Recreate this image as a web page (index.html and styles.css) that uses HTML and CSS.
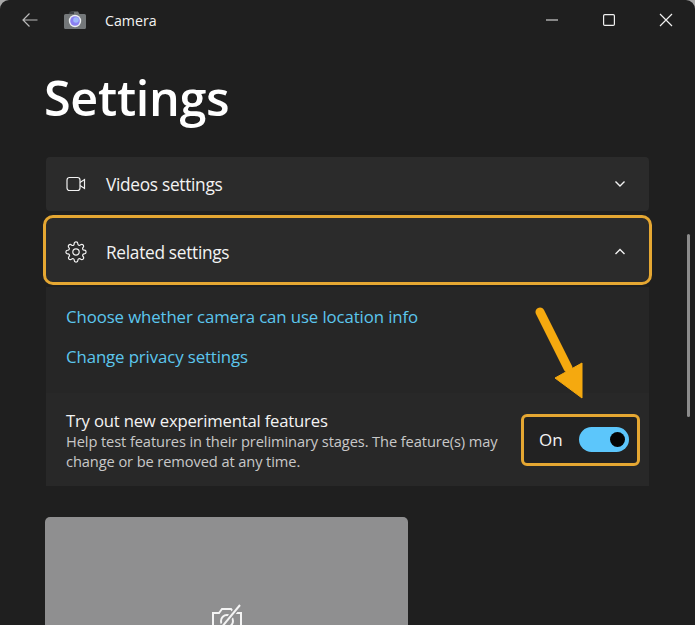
FILE: index.html
```html
<!DOCTYPE html>
<html lang="en">
<head>
<meta charset="utf-8">
<title>Camera Settings</title>
<link rel="stylesheet" href="styles.css">
</head>
<body>
<div class="window">
  <header class="titlebar">
    <svg class="back" width="18" height="16" viewBox="0 0 18 16"><path d="M16.500 8H2M8.500 1.500 2 8l6.500 6.500" fill="none" stroke="#b9b9b9" stroke-width="1.200"/></svg>
    <svg class="appicon" width="24" height="20" viewBox="0 0 24 20"><path d="M1 5.500Q1 4 2.500 4H7L8.500 1.500H15L16.500 4H21.500Q23 4 23 5.500V17.500Q23 19 21.500 19H2.500Q1 19 1 17.500Z" fill="#74787a"/><path d="M7 1.500H11V4H5.500Z" fill="#3c4043"/><circle cx="12" cy="11" r="6.200" fill="#eceff1"/><circle cx="12" cy="11" r="4.800" fill="#8b80f2"/><circle cx="13" cy="10" r="2.800" fill="#9fb8fa"/></svg>
    <span class="apptitle">Camera</span>
    <div class="controls">
      <svg width="14" height="14" viewBox="0 0 14 14"><path d="M1 7H13" stroke="#f0f0f0" stroke-width="1.200"/></svg>
      <svg width="14" height="14" viewBox="0 0 14 14"><rect x="1.600" y="1.600" width="10.800" height="10.800" rx="1.200" fill="none" stroke="#f0f0f0" stroke-width="1.200"/></svg>
      <svg width="14" height="14" viewBox="0 0 14 14"><path d="M1 1 13 13M13 1 1 13" stroke="#f0f0f0" stroke-width="1.200"/></svg>
    </div>
  </header>

  <main class="content">
    <h1 class="heading">Settings</h1>

    <section class="card row">
      <svg class="rowicon" width="20" height="16" viewBox="0 0 20 16"><rect x="1" y="1.500" width="13" height="13" rx="2.500" fill="none" stroke="#f2f2f2" stroke-width="1.200"/><path d="M14 6.500 18.500 3.500V12.500L14 9.500" fill="none" stroke="#f2f2f2" stroke-width="1.200"/></svg>
      <span class="rowlabel">Videos settings</span>
      <svg class="chev" width="12" height="8" viewBox="0 0 12 8"><path d="M1.500 1.500 6 6l4.500-4.500" fill="none" stroke="#f2f2f2" stroke-width="1.400"/></svg>
    </section>

    <section class="card row related">
      <svg class="gear" width="22" height="22" viewBox="0 0 24 24"><path d="M12 15.500a3.500 3.500 0 1 0 0-7 3.500 3.500 0 0 0 0 7Z" fill="none" stroke="#f2f2f2" stroke-width="1.300"/><path d="M19.400 15a1.650 1.650 0 0 0 .33 1.820l.06.06a2 2 0 1 1-2.830 2.830l-.06-.06a1.650 1.650 0 0 0-1.820-.33 1.650 1.650 0 0 0-1 1.510V21a2 2 0 1 1-4 0v-.09a1.650 1.650 0 0 0-1-1.510 1.650 1.650 0 0 0-1.820.33l-.06.06a2 2 0 1 1-2.830-2.830l.06-.06a1.650 1.650 0 0 0 .33-1.820 1.650 1.650 0 0 0-1.510-1H3a2 2 0 1 1 0-4h.09a1.650 1.650 0 0 0 1.510-1 1.650 1.650 0 0 0-.33-1.820l-.06-.06a2 2 0 1 1 2.830-2.830l.06.06a1.650 1.650 0 0 0 1.820.33h.08a1.650 1.650 0 0 0 1-1.510V3a2 2 0 1 1 4 0v.09a1.650 1.650 0 0 0 1 1.510 1.650 1.650 0 0 0 1.820-.33l.06-.06a2 2 0 1 1 2.830 2.830l-.06.06a1.650 1.650 0 0 0-.33 1.820v.08a1.650 1.650 0 0 0 1.510 1H21a2 2 0 1 1 0 4h-.09a1.650 1.650 0 0 0-1.510 1Z" fill="none" stroke="#f2f2f2" stroke-width="1.300"/></svg>
      <span class="rowlabel">Related settings</span>
      <svg class="chev" width="12" height="8" viewBox="0 0 12 8"><path d="M1.500 6 6 1.500 10.500 6" fill="none" stroke="#f2f2f2" stroke-width="1.400"/></svg>
    </section>

    <section class="panel">
      <div class="links">
        <a class="link" href="#">Choose whether camera can use location info</a>
        <a class="link" href="#">Change privacy settings</a>
      </div>
      <div class="experiment">
        <div class="exptext">
          <div class="exptitle">Try out new experimental features</div>
          <div class="expdesc">Help test features in their preliminary stages. The feature(s) may change or be removed at any time.</div>
        </div>
        <div class="togglebox">
          <span class="onlabel">On</span>
          <span class="toggle"><span class="knob"></span></span>
        </div>
      </div>
    </section>

    <section class="preview">
      <svg class="nocam" width="34" height="30" viewBox="0 0 34 30"><path d="M3 9H9L12 5H21L24 9H31V27H3Z" fill="none" stroke="#f4f4f4" stroke-width="2"/><circle cx="17" cy="17" r="6" fill="none" stroke="#f4f4f4" stroke-width="2"/><path d="M11 24 30 1" stroke="#8f8f90" stroke-width="5"/><path d="M11 24 30 1" stroke="#f4f4f4" stroke-width="2"/></svg>
    </section>
  </main>

  <div class="scrollthumb"></div>
  <svg class="arrow" width="56" height="100" viewBox="0 0 56 100"><path d="M6 6 34 62" stroke="#f5a90f" stroke-width="9" stroke-linecap="round"/><path d="M21 72 48 57V92Z" fill="#f5a90f" stroke="#f5a90f" stroke-width="1"/></svg>
</div>
</body>
</html>
```
FILE: styles.css
```css
* { box-sizing: border-box; }
html, body { margin: 0; height: 100%; background: #a8a8a8; overflow: hidden; }
body { font-family: "Open Sans", "Noto Sans", sans-serif; color: #f3f3f3; }
.window {
  position: relative;
  width: 695px;
  height: 625px;
  background: #1f1f1f;
  border-radius: 9px 9px 0 0;
  overflow: hidden;
}
.titlebar {
  display: flex;
  align-items: center;
  height: 40px;
  padding-left: 21px;
}
.back { margin-right: 24px; }
.appicon { margin-right: 18px; }
.apptitle { font-size: 14.200px; }
.controls {
  margin-left: auto;
  display: flex;
  gap: 43px;
  padding-right: 22px;
}
.content { padding: 0 46px; }
.heading {
  margin: 22px 0 25px -2px;
  font-size: 48.500px;
  line-height: 70px;
  font-weight: 600;
  letter-spacing: -0.3px;
  color: #fff;
}
.card { background: #2b2b2b; border-radius: 4px; }
.row {
  display: flex;
  align-items: center;
  width: 603px;
  height: 54px;
  padding: 0 23px 0 20px;
}
.rowlabel { margin-left: 20px; font-size: 17.300px; letter-spacing: -0.3px; }
.gear { flex: none; margin: 0 -1px; }
.chev { margin-left: auto; }
.related {
  margin-top: 7px;
  height: 64px;
  padding-top: 4px;
  outline: 3px solid #e5a732;
  outline-offset: 0;
  border-radius: 7px;
}
.panel {
  margin-top: 5px;
  width: 603px;
  height: 199px;
  background: #262626;
  display: flex;
  flex-direction: column;
  border-radius: 0 0 4px 4px;
}
.links {
  height: 106px;
  padding: 18px 20px 0;
  display: flex;
  flex-direction: column;
  gap: 16px;
}
.link {
  color: #5cc6ee;
  font-size: 16.800px;
  line-height: 24px;
  letter-spacing: -0.1px;
  text-decoration: none;
}
.experiment {
  flex: 1;
  display: flex;
  align-items: center;
  justify-content: space-between;
  padding: 0 9px 0 20px;
  background: #282828;
}
.exptext { width: 440px; }
.exptitle { font-size: 16.700px; line-height: 24px; margin-bottom: -2px; letter-spacing: -0.2px; }
.expdesc { font-size: 14.650px; line-height: 20px; letter-spacing: -0.1px; color: #c8c8c8; }
.togglebox {
  display: flex;
  align-items: center;
  justify-content: space-between;
  width: 119px;
  height: 52px;
  padding: 0 8px 0 15px;
  border: 3px solid #e5a732;
  border-radius: 6px;
  background: #222;
}
.onlabel { font-size: 17px; }
.toggle {
  display: flex;
  align-items: center;
  justify-content: flex-end;
  width: 50px;
  height: 25px;
  padding-right: 4px;
  border-radius: 13px;
  background: #5cc6fb;
}
.knob { width: 15px; height: 15px; border-radius: 50%; background: #050505; }
.preview {
  display: flex;
  justify-content: center;
  margin: 31px 0 0 -1px;
  width: 363px;
  height: 200px;
  padding-top: 87px;
  background: #8f8f90;
  border-radius: 5px;
}
.nocam { flex: none; }
.scrollthumb {
  position: absolute;
  left: 687px;
  top: 234px;
  width: 3px;
  height: 183px;
  border-radius: 2px;
  background: #8c8c8c;
}
.arrow {
  position: absolute;
  left: 534px;
  top: 306px;
}
```
